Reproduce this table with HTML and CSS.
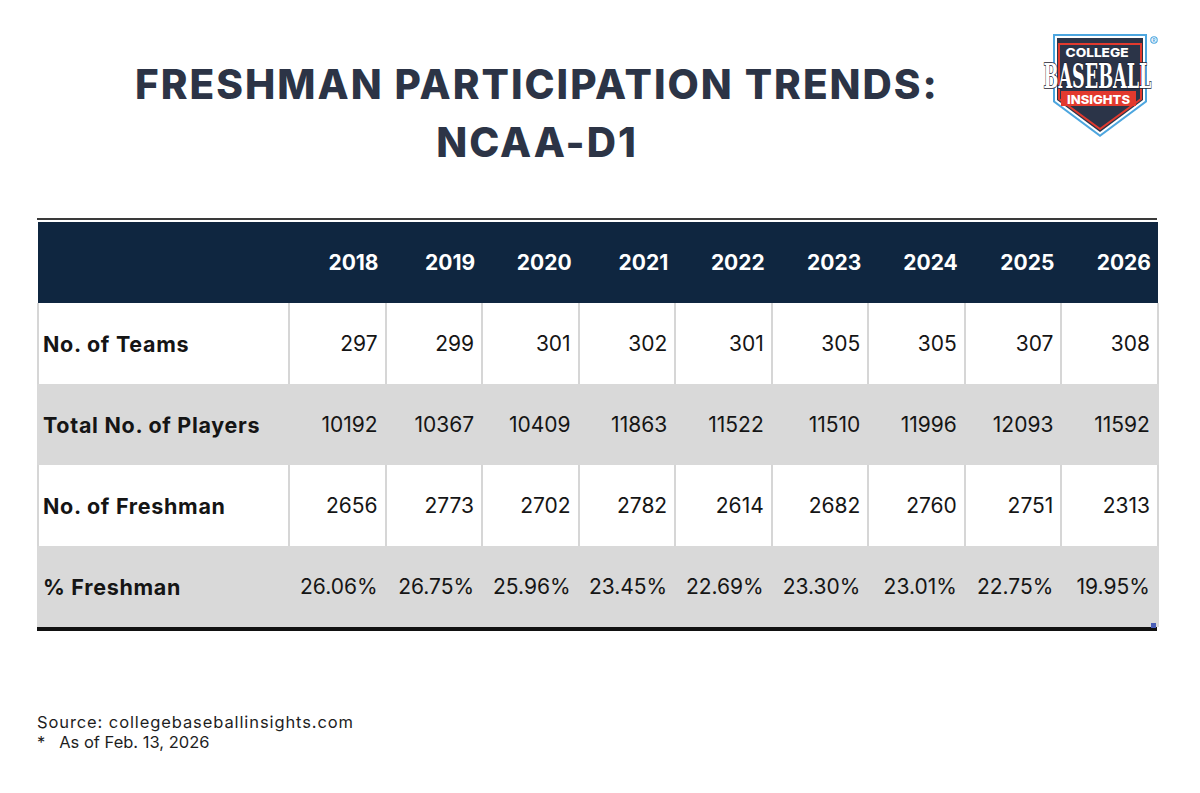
FILE: index.html
```html
<!DOCTYPE html>
<html>
<head>
<meta charset="utf-8">
<link rel="stylesheet" href="styles.css">
</head>
<body>
<div class="page">
  <header class="header">
    <h1 class="title">FRESHMAN PARTICIPATION TRENDS:<br>NCAA-D1</h1>
    <svg class="logo" width="130" height="114" viewBox="0 0 130 114">
      <polygon points="15,6 109,6 109,74 62,109 15,74" fill="#4da6df"/>
      <polygon points="17,8 107,8 107,73 62,106.5 17,73" fill="#ffffff"/>
      <polygon points="19,10 105,10 105,72 62,104 19,72" fill="#2b3448"/>
      <polygon points="21,16 103,16 103,71 62,101 21,71" fill="none" stroke="#e23a2e" stroke-width="2"/>
      <text x="59" y="28.5" text-anchor="middle" class="logo-college" textLength="63" lengthAdjust="spacingAndGlyphs">COLLEGE</text>
      <text x="59.5" y="60" text-anchor="middle" class="logo-baseball" textLength="108" lengthAdjust="spacingAndGlyphs">BASEBALL</text>
      <rect x="23" y="63" width="75" height="15" fill="#e23a2e"/>
      <text x="60.5" y="75.5" text-anchor="middle" class="logo-insights" textLength="63" lengthAdjust="spacingAndGlyphs">INSIGHTS</text>
      <circle cx="116" cy="12" r="3.2" fill="none" stroke="#4da6df" stroke-width="1.1"/>
      <text x="116" y="14" text-anchor="middle" class="logo-reg">R</text>
    </svg>
  </header>

  <div class="table-wrap">
    <table class="data">
      <colgroup>
        <col class="c-label">
        <col span="9" class="c-year">
      </colgroup>
      <thead>
        <tr>
          <th></th>
          <th>2018</th><th>2019</th><th>2020</th><th>2021</th><th>2022</th><th>2023</th><th>2024</th><th>2025</th><th>2026</th>
        </tr>
      </thead>
      <tbody>
        <tr class="row-white">
          <td class="label">No. of Teams</td>
          <td>297</td><td>299</td><td>301</td><td>302</td><td>301</td><td>305</td><td>305</td><td>307</td><td>308</td>
        </tr>
        <tr class="row-gray">
          <td class="label">Total No. of Players</td>
          <td>10192</td><td>10367</td><td>10409</td><td>11863</td><td>11522</td><td>11510</td><td>11996</td><td>12093</td><td>11592</td>
        </tr>
        <tr class="row-white">
          <td class="label">No. of Freshman</td>
          <td>2656</td><td>2773</td><td>2702</td><td>2782</td><td>2614</td><td>2682</td><td>2760</td><td>2751</td><td>2313</td>
        </tr>
        <tr class="row-gray">
          <td class="label">% Freshman</td>
          <td>26.06%</td><td>26.75%</td><td>25.96%</td><td>23.45%</td><td>22.69%</td><td>23.30%</td><td>23.01%</td><td>22.75%</td><td>19.95%</td>
        </tr>
      </tbody>
    </table>
    <span class="handle"></span>
  </div>

  <footer class="footer">
    <p>Source: collegebaseballinsights.com</p>
    <p class="note">*&nbsp;&nbsp; As of Feb. 13, 2026</p>
  </footer>
</div>
</body>
</html>
```

FILE: styles.css
```css
html, body {
  margin: 0;
  padding: 0;
  background: #ffffff;
}

.page {
  width: 1200px;
  height: 793px;
  position: relative;
  font-family: "Inter", "Liberation Sans", sans-serif;
  color: #151515;
}

.header {
  display: flex;
  align-items: flex-start;
  padding: 0 0 0 30px;
  height: 217px;
}

.title {
  width: 1014px;
  margin: 0;
  padding-top: 56px;
  text-align: center;
  font-family: "Inter", sans-serif;
  font-weight: 800;
  font-size: 40.5px;
  line-height: 58px;
  color: #2c3446;
  letter-spacing: 2px;
}

.logo {
  margin-left: -6px;
  margin-top: 28px;
  flex: none;
}

.logo-college {
  font-family: "Inter", sans-serif;
  font-weight: 800;
  font-size: 12px;
  fill: #ffffff;
}

.logo-baseball {
  font-family: "DejaVu Serif", serif;
  font-weight: bold;
  font-size: 34px;
  fill: #ffffff;
  stroke: #1d2230;
  stroke-width: 1.6px;
  paint-order: stroke;
}

.logo-insights {
  font-family: "Inter", sans-serif;
  font-weight: 800;
  font-size: 12px;
  fill: #ffffff;
}

.logo-reg {
  font-family: "Inter", sans-serif;
  font-weight: 700;
  font-size: 4.5px;
  fill: #4da6df;
}

.table-wrap {
  position: relative;
  margin-left: 37px;
  width: 1120px;
  border-top: 2px solid #3a3a3a;
  padding-top: 2px;
  margin-top: 1px;
  border-bottom: 4px solid #111111;
}

.data {
  width: 1120px;
  border-collapse: collapse;
  table-layout: fixed;
}

.c-label { width: 251px; }
.c-year { width: 96.55px; }

.data th,
.data td {
  height: 81px;
  padding: 0 7px 0 0;
  text-align: right;
  vertical-align: middle;
  box-sizing: border-box;
}

.data th {
  background: #0f2640;
  color: #ffffff;
  font-weight: 700;
  font-size: 21px;
  border: none;
}

.data td {
  font-size: 21px;
  font-weight: 400;
  color: #151515;
}

.data td.label {
  text-align: left;
  padding-left: 4px;
  font-weight: 700;
  font-size: 21.5px;
  letter-spacing: 0.7px;
}

.row-white td {
  background: #ffffff;
  border-left: 2px solid #d6d6d6;
  border-right: 2px solid #d6d6d6;
}

.row-gray td {
  background: #d9d9d9;
  border-left: 2px solid #d9d9d9;
  border-right: 2px solid #d9d9d9;
}

.handle {
  position: absolute;
  right: 1px;
  bottom: -1px;
  width: 5px;
  height: 5px;
  background: #4a5fb8;
}

.footer {
  padding: 82px 0 0 37px;
  font-size: 16.5px;
  line-height: 19.5px;
  letter-spacing: 0.9px;
  color: #1e1e1e;
}

.footer p {
  margin: 0;
}

.footer .note {
  letter-spacing: 0;
}
```
